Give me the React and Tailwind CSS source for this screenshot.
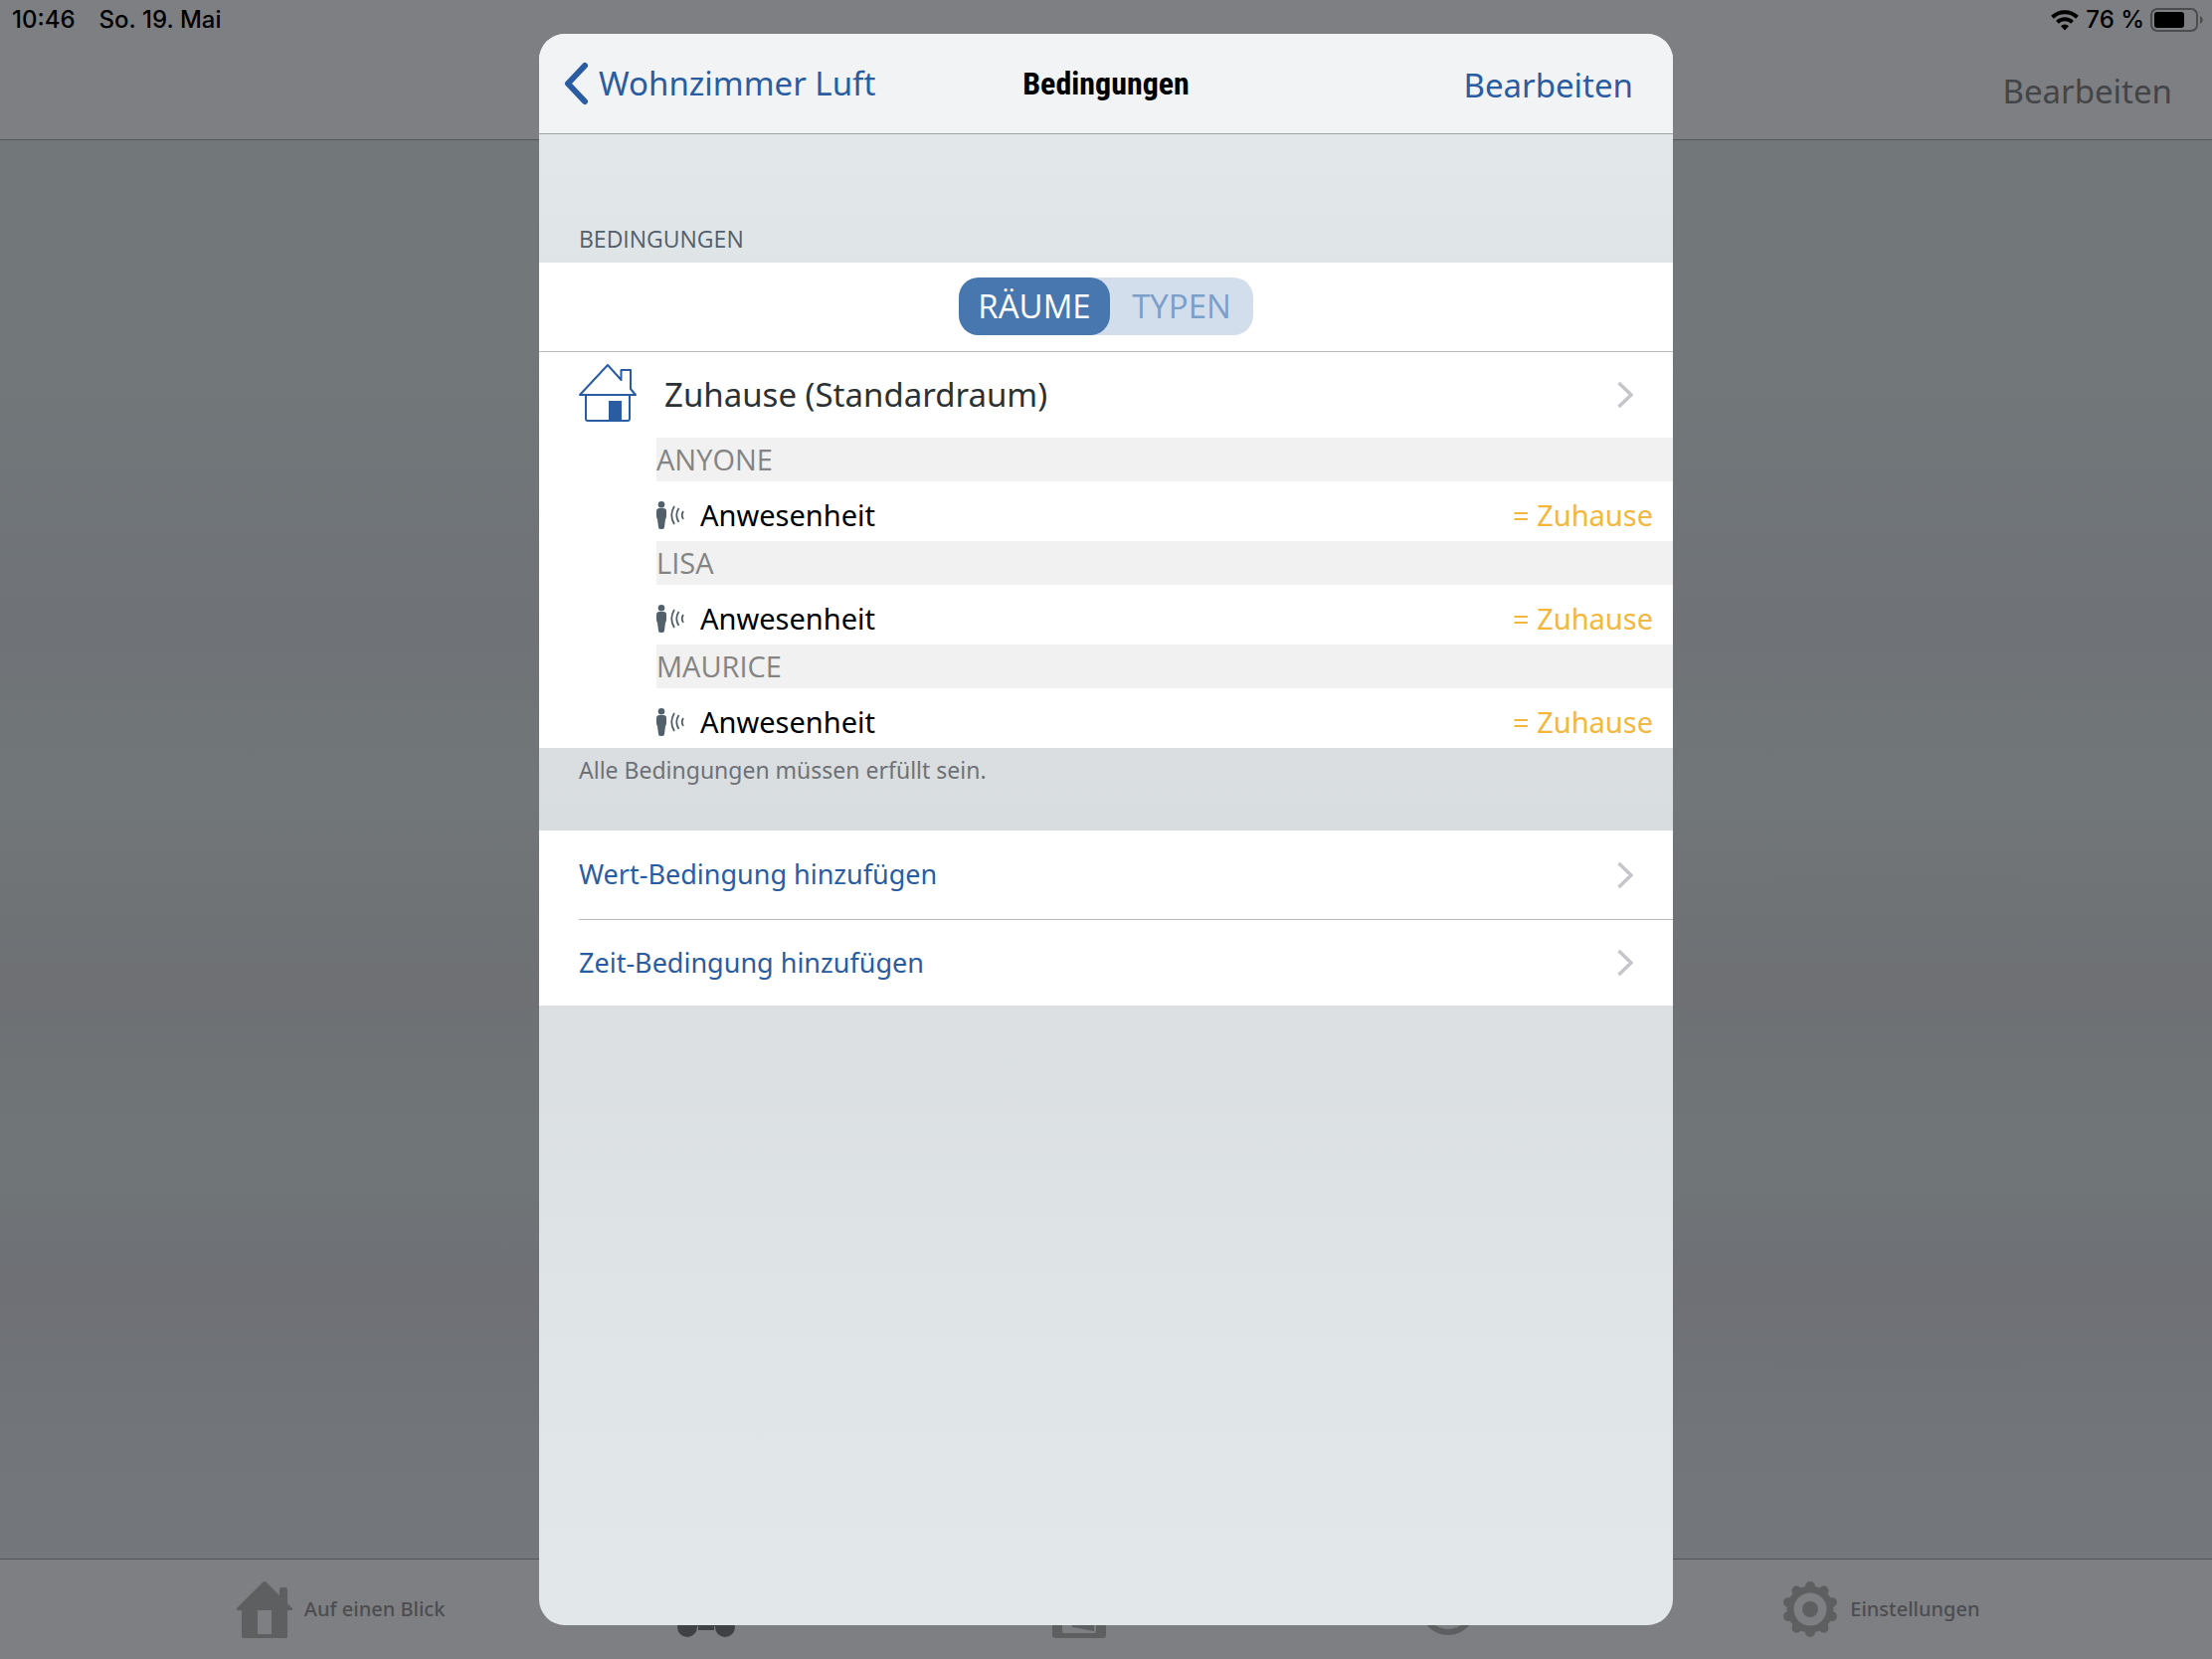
import React, { useState } from "react";

const conditions = [
  { id: "anyone", person: "ANYONE", label: "Anwesenheit", value: "= Zuhause" },
  { id: "lisa", person: "LISA", label: "Anwesenheit", value: "= Zuhause" },
  { id: "maurice", person: "MAURICE", label: "Anwesenheit", value: "= Zuhause" },
];

const gearTeeth = [0, 36, 72, 108, 144, 180, 216, 252, 288, 324];

function App() {
  return (
    <div className="min-h-screen flex flex-col font-['Noto_Sans',sans-serif] bg-[linear-gradient(to_bottom,#727879_0%,#72777a_20%,#6f7377_38%,#717678_48%,#6e7074_60%,#707678_70%,#6e7075_77%,#74787c_94%)]">
      <header className="bg-[#7e7f82] border-b border-[#545558]">
        <StatusBar />
        <nav className="flex justify-end items-center h-[100px] pt-1 pr-10">
          <button className="text-[33px] leading-10 text-[#434447]">Bearbeiten</button>
        </nav>
      </header>
      <main className="flex-1" />
      <TabBar />
      <ConditionsSheet />
    </div>
  );
}

function StatusBar() {
  return (
    <div className="flex justify-between items-center h-10 pl-3 pr-2 text-2xl font-medium text-black font-['Inter',sans-serif]">
      <div className="flex gap-6">
        <span>10:46</span>
        <span>So. 19. Mai</span>
      </div>
      <div className="flex items-center gap-1.5">
        <svg width="30" height="22" viewBox="0 0 30 22" fill="none" stroke="#000" strokeWidth="4">
          <path d="M2.5 8.2a18 18 0 0 1 25 0" />
          <path d="M7.5 13.4a10.800 10.800 0 0 1 15 0" />
          <path d="M15 21.500l-4-4.200a5.600 5.600 0 0 1 8 0z" fill="#000" stroke="none" />
        </svg>
        <span>76 %</span>
        <svg width="54" height="26" viewBox="0 0 54 26">
          <rect x="1" y="2" width="46" height="22" rx="6" fill="none" stroke="#4b4c4e" strokeWidth="2" />
          <rect x="4" y="5" width="30" height="16" rx="3" fill="#000" />
          <path d="M50 9c3.500 1.500 3.500 6.500 0 8z" fill="#4b4c4e" />
        </svg>
      </div>
    </div>
  );
}

function TabBar() {
  return (
    <footer className="grid grid-cols-5 h-[101px] pl-[149px] pr-[139px] bg-[#7e7f82] border-t border-[#545558] text-[20px] font-medium text-[#4c4d50]">
      <button className="flex items-center justify-center gap-3">
        <svg width="56" height="58" viewBox="0 0 56 58" fill="#5e5f61">
          <path
            fillRule="evenodd"
            d="M26 2q2-2 4 0l13 13V9q0-2 2-2h4q2 0 2 2v14l5 5q1 2-1 2h-4v26q0 3-3 3H8q-3 0-3-3V30H1q-2 0-1-2zM21 30v24h14V30z"
          />
        </svg>
        Auf einen Blick
      </button>
      <button aria-label="Szenen" className="flex items-center justify-center pr-10">
        <svg width="60" height="58" viewBox="0 0 60 58" fill="#404144">
          <path d="M5 34Q6 22 15 22h30q9 0 10 12v12H5z" />
          <circle cx="11" cy="47" r="10" />
          <circle cx="49" cy="47" r="10" />
          <path d="M22 40h16v10H22z" />
        </svg>
      </button>
      <button aria-label="Räume" className="flex items-center justify-center pr-16">
        <svg width="54" height="58" viewBox="0 0 54 58">
          <rect y="2" width="54" height="56" rx="3" fill="#5e5f61" />
          <rect x="10" y="12" width="34" height="41" rx="2" fill="#7e7f82" />
          <path d="M20 14h22v37l-22-4z" fill="#5e5f61" />
        </svg>
      </button>
      <button aria-label="Automation" className="flex items-center justify-center pr-24">
        <svg width="56" height="58" viewBox="0 0 56 58" fill="none" stroke="#5e5f61" strokeWidth="6">
          <circle cx="28" cy="27" r="25" />
        </svg>
      </button>
      <button className="flex items-center justify-center gap-3">
        <svg width="56" height="58" viewBox="-28 -29 56 58" fill="#5e5f61">
          {gearTeeth.map((angle) => (
            <rect key={angle} x="-5" y="-28" width="10" height="11" rx="5" transform={`rotate(${angle})`} />
          ))}
          <circle r="20" fill="none" stroke="#5e5f61" strokeWidth="7" />
          <circle r="8" />
        </svg>
        Einstellungen
      </button>
    </footer>
  );
}

function ConditionsSheet() {
  return (
    <div className="fixed inset-0 flex justify-center py-[34px]">
      <section
        role="dialog"
        aria-labelledby="sheet-title"
        className="w-full max-w-[1140px] overflow-hidden rounded-[26px] bg-[linear-gradient(to_bottom,#e2e7e9_6%,#dfe4e7_15%,#dadee1_45%,#d8dde0_50%,#dbdfe2_61%,#dfe4e7_80%,#e2e8ea_100%)]"
      >
        <header className="grid grid-cols-3 items-center h-[101px] px-6 bg-[#f2f3f5] border-b border-[#9aa3a3]">
          <button className="flex items-center gap-2 text-[33px] leading-10 whitespace-nowrap text-[#295ca1]">
            <svg width="28" height="44" viewBox="0 0 28 44" fill="none" stroke="#295ca1" strokeWidth="6" strokeLinecap="round" strokeLinejoin="round">
              <path d="M22 4L5 22l17 18" />
            </svg>
            Wohnzimmer Luft
          </button>
          <h1 id="sheet-title" className="text-center text-[32px] leading-10 font-bold text-black font-['Liberation_Sans_Narrow','Roboto_Condensed','Roboto',sans-serif]">
            Bedingungen
          </h1>
          <button className="justify-self-end pt-1 pr-4 text-[33px] leading-10 text-[#295ca1]">Bearbeiten</button>
        </header>

        <h2 className="pt-[89px] pb-2 pl-10 text-[23px] leading-8 text-[#52606b] font-['Open_Sans',sans-serif]">
          BEDINGUNGEN
        </h2>
        <div className="bg-white">
          <GroupSwitch />
          <button className="flex items-center w-full h-[86px] px-10 text-[33px] leading-10 text-[#2b3134]">
            <HouseIcon />
            <span className="flex-1 pl-7 text-left">Zuhause (Standardraum)</span>
            <Chevron />
          </button>
          <div className="pl-[118px] text-[29px] leading-[44px]">
            {conditions.map((condition) => (
              <Condition key={condition.id} {...condition} />
            ))}
          </div>
        </div>
        <p className="pt-1.5 pb-[45px] pl-10 text-[23px] leading-8 text-[#6f7175]">
          Alle Bedingungen müssen erfüllt sein.
        </p>

        <div className="bg-white pl-10 text-[27px] text-[#295ca1]">
          <button className="flex items-center justify-between w-full h-[90px] pr-10 border-b border-[#b9bcbc]">
            Wert-Bedingung hinzufügen
            <Chevron />
          </button>
          <button className="flex items-center justify-between w-full h-[86px] pr-10">
            Zeit-Bedingung hinzufügen
            <Chevron />
          </button>
        </div>
      </section>
    </div>
  );
}

function GroupSwitch() {
  const [group, setGroup] = useState("rooms");

  const tabClass = (id) =>
    group === id ? "rounded-[20px] bg-[#4877af] text-white" : "text-[#7a9fc9]";

  return (
    <div className="flex justify-center pt-[15px] pb-4 border-b border-[#b9bcbc]">
      <div className="flex h-[58px] rounded-[20px] bg-[#d3deec] text-[33px] font-['Open_Sans',sans-serif]">
        <button
          className={`w-[152px] ${tabClass("rooms")}`}
          aria-pressed={group === "rooms"}
          onClick={() => setGroup("rooms")}
        >
          RÄUME
        </button>
        <button
          className={`w-36 ${tabClass("types")}`}
          aria-pressed={group === "types"}
          onClick={() => setGroup("types")}
        >
          TYPEN
        </button>
      </div>
    </div>
  );
}

const Condition = ({ person, label, value }) => (
  <div>
    <h3 className="bg-[#f1f1f1] text-[#848484] font-['Open_Sans',sans-serif]">{person}</h3>
    <button className="flex items-center w-full h-[60px] pt-2 pr-5">
      <PresenceIcon />
      <span className="flex-1 pl-4 text-left text-black">{label}</span>
      <span className="text-[#f3b73e]">{value}</span>
    </button>
  </div>
);

const Chevron = () => (
  <svg width="16" height="28" viewBox="0 0 16 28" fill="none" stroke="#c6c6ca" strokeWidth="3.500">
    <path d="M1.500 2L14 14l-12.500 12" />
  </svg>
);

const HouseIcon = () => (
  <svg className="mb-1" width="58" height="58" viewBox="0 0 58 58" fill="none" stroke="#295ca1" strokeWidth="2" strokeLinejoin="round">
    <path d="M1 31L29 1l13.500 15V6H52v19l5 6z" />
    <path d="M7 31v24q0 2 2 2h40q2 0 2-2V31" />
    <path d="M30 37h13v20H30z" fill="#295ca1" stroke="none" />
  </svg>
);

const PresenceIcon = () => (
  <svg width="28" height="28" viewBox="0 0 28 28" fill="#52606b">
    <circle cx="5" cy="3.300" r="3.300" />
    <path d="M0 10q0-3 3-3h4q3 0 3 3v5q0 2-1 3l-1 8q0 2-2 2H4q-2 0-2-2l-1-8q-1-1-1-3z" />
    <g fill="none" stroke="#52606b" strokeWidth="1.800">
      <path d="M18 5q-5.500 9 0 18" />
      <path d="M22.500 7q-4.500 7 0 14" />
      <path d="M27 10q-2.500 4 0 8" />
    </g>
  </svg>
);

export default App;
